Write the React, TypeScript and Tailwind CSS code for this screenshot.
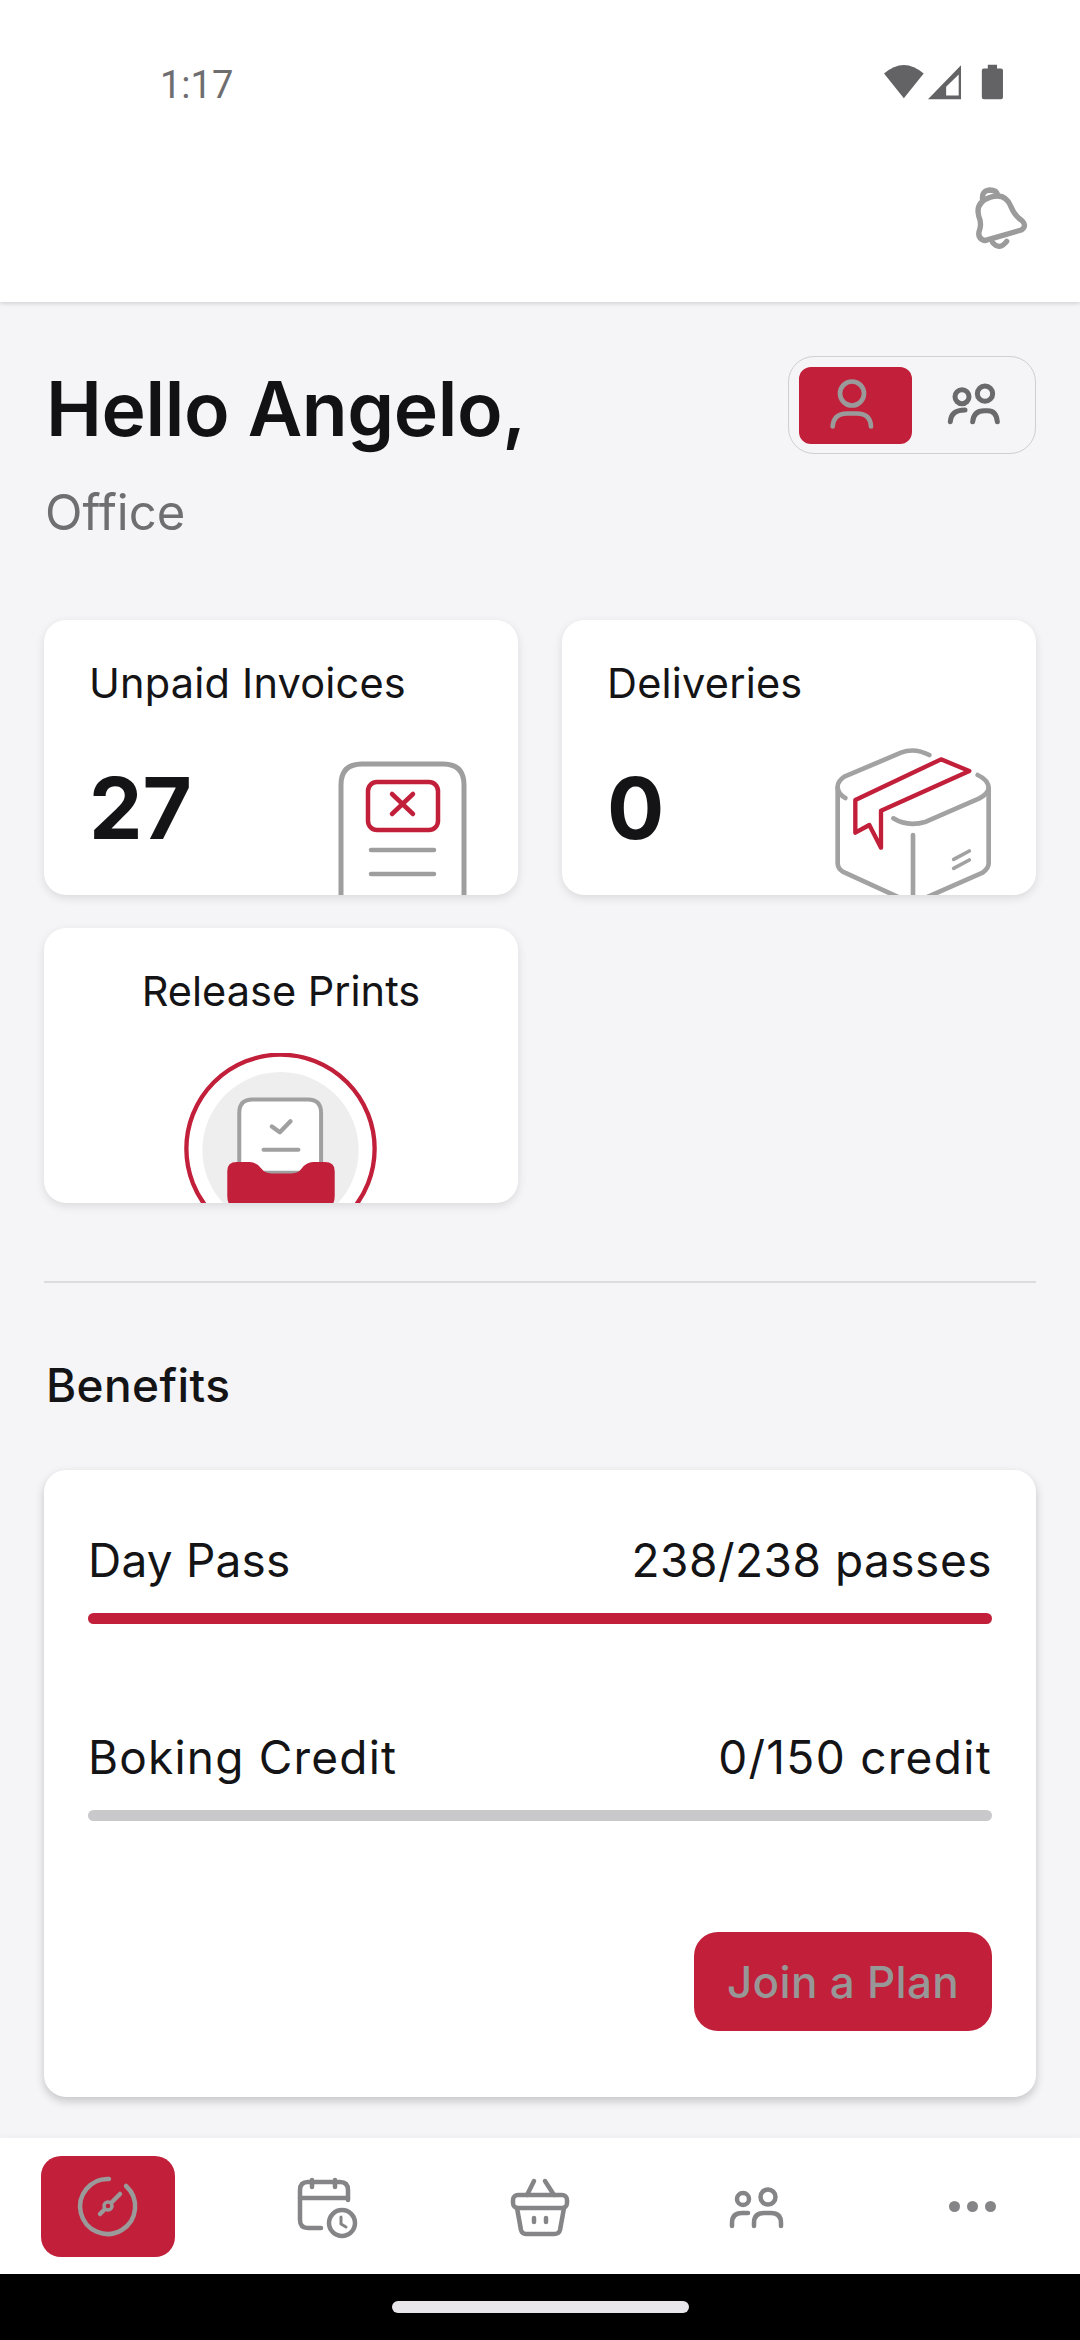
import React from "react";

const RED = "#c21f3a";

function StatusIcons() {
  return (
    <svg width="127" height="38" viewBox="60 40 380 115">
      <path d="M70 72 Q130 20 190 72 L130 147 Z" fill="#636365" />
      <path fillRule="evenodd" d="M203 150 L303 47 V150 Z M258 138 H296 V75 L258 112 Z" fill="#636365" />
      <path d="M384 45 H412 V57 H424 Q430 57 430 63 V144 Q430 150 424 150 H372 Q366 150 366 144 V63 Q366 57 372 57 H384 Z" fill="#636365" />
    </svg>
  );
}

function Bell() {
  return (
    <svg width="60" height="70" viewBox="330 400 180 210" fill="none" stroke="#9b9b9b" strokeWidth="16" strokeLinecap="round" strokeLinejoin="round">
      <path d="M362 448 Q358 420 383 418 Q404 418 408 434" />
      <path d="M368 570 Q345 562 352 540 Q360 520 350 495 Q340 455 385 440 Q430 425 447 468 Q458 495 480 510 Q496 526 478 538 Z" />
      <path d="M392 576 Q412 600 434 572" />
    </svg>
  );
}

function PersonIcon() {
  return (
    <svg width="50" height="56" viewBox="195 110 150 165" fill="none" stroke="#9a9a9a" strokeWidth="14" strokeLinecap="round">
      <circle cx="270" cy="158" r="36" />
      <path d="M212 257 Q215 218 255 218 H285 Q325 218 327 257" />
    </svg>
  );
}

function PeopleIconToggle() {
  return (
    <svg width="56" height="44" viewBox="555 125 168 130" fill="none" stroke="#6a6a6c" strokeWidth="15" strokeLinecap="round">
      <circle cx="603" cy="165" r="21" />
      <circle cx="672" cy="156" r="23" />
      <path d="M568 240 Q570 205 612 205" />
      <path d="M635 240 Q638 207 670 207 H680 Q706 207 709 240" />
    </svg>
  );
}

function InvoiceArt() {
  return (
    <svg width="134" height="137" viewBox="335 758 134 137" fill="none" strokeLinecap="round" strokeLinejoin="round" className="-mt-[1px] mr-[5px] shrink-0">
      <path d="M341 900 V785 Q341 764 362 764 H443 Q464 764 464 785 V900" stroke="#9e9e9f" strokeWidth="5" />
      <rect x="368" y="782" width="70" height="48" rx="9" stroke={RED} strokeWidth="4.5" />
      <path d="M392 794 L413 814 M413 794 L392 814" stroke={RED} strokeWidth="4.5" />
      <path d="M371 850 H434 M371 874 H434" stroke="#9e9e9f" strokeWidth="4.5" />
    </svg>
  );
}

function BoxArt() {
  return (
    <svg width="164" height="149" viewBox="90 78 492 447" fill="none" strokeLinecap="round" strokeLinejoin="round" className="-mr-[3px] -mt-[13px] shrink-0">
      <g stroke="#a2a2a3" strokeWidth="14">
        <path d="M385 105 Q340 82 300 98 L130 170 Q108 185 110 203 Q112 222 133 234" />
        <path d="M110 203 V430 Q110 445 125 455 L300 535" />
        <path d="M530 165 Q563 180 563 205 V430 Q563 445 545 458 L370 535" />
        <path d="M277 295 Q320 322 375 305 L535 235 Q560 222 563 205" />
        <path d="M336 345 V535" />
        <path d="M458 418 L505 393 M458 445 L505 420" strokeWidth="11" />
      </g>
      <path d="M420 118 L505 153 L240 272 V383 L205 315 L163 338 V240 Z" stroke={RED} strokeWidth="13" />
    </svg>
  );
}

function ReleaseArt() {
  return (
    <svg width="197" height="153" viewBox="100 60 590 460" fill="none" strokeLinecap="round" strokeLinejoin="round" className="shrink-0">
      <circle cx="392" cy="348" r="283" stroke={RED} strokeWidth="13" />
      <circle cx="392" cy="352" r="235" fill="#eeeeef" />
      <path d="M268 420 V240 Q268 200 308 200 H474 Q514 200 514 240 V420 Z" fill="#fff" stroke="#a0a0a1" strokeWidth="12" />
      <path d="M366 281 L390 298 L422 265" stroke="#a0a0a1" strokeWidth="13" />
      <path d="M341 351 H446" stroke="#a0a0a1" strokeWidth="12" />
      <path d="M232 415 Q232 388 260 388 H300 Q320 388 335 408 Q345 422 365 422 H425 Q445 422 455 408 Q470 388 490 388 H525 Q555 388 555 415 V490 Q555 525 525 525 H260 Q232 525 232 490 Z" fill={RED} />
    </svg>
  );
}

function NavSvg({ stroke, children }: { stroke: string; children: React.ReactNode }) {
  return (
    <svg width="70" height="70" viewBox="-35 -35 70 70" fill="none" stroke={stroke} strokeWidth="4.5" strokeLinecap="round" strokeLinejoin="round">
      {children}
    </svg>
  );
}

function Card({ title, value, art }: { title: string; value: string; art: React.ReactNode }) {
  return (
    <div className="h-[275px] overflow-hidden rounded-[22px] bg-white pl-[45px] pr-[44px] pt-[37px] shadow-[0_3px_10px_rgba(0,0,0,0.11)]">
      <div className="text-[41.5px] leading-[52px] tracking-[0.2px] text-[#141416]">{title}</div>
      <div className="mt-[50px] flex items-start justify-between">
        <div className="mt-[6px] text-[85px] font-bold leading-[88px] text-[#141416]">{value}</div>
        {art}
      </div>
    </div>
  );
}

function Meter({ label, value, color, labelClass, valueClass }: { label: string; value: string; color: string; labelClass: string; valueClass: string }) {
  return (
    <div>
      <div className="flex items-center justify-between text-[46px] leading-[60px] text-[#141416]">
        <span className={labelClass}>{label}</span>
        <span className={valueClass}>{value}</span>
      </div>
      <div className="mt-[23px] h-[11px] rounded-full" style={{ backgroundColor: color }} />
    </div>
  );
}

export default function App() {
  return (
    <div className="flex h-[2340px] w-[1080px] flex-col overflow-hidden bg-[#f5f4f7] [font-family:Inter,sans-serif]">
      <header className="relative z-10 h-[302px] shrink-0 bg-white shadow-[0_1px_5px_rgba(0,0,0,0.18)]">
        <div className="flex h-[164px] items-start justify-between pl-[160px] pr-[73px] pt-[63px]">
          <span className="mt-[3px] text-[38px] leading-[38px] text-[#6e6e70] [font-family:Roboto,sans-serif]">1:17</span>
          <StatusIcons />
        </div>
        <div className="flex justify-end pr-[48px] pt-[20px]">
          <Bell />
        </div>
      </header>

      <main className="min-h-0 flex-1 overflow-hidden px-[44px]">
        <div className="flex items-start justify-between pt-[54px]">
          <div className="pl-[2px]">
            <h1 className="mt-[7px] text-[75px] font-semibold leading-[92px] tracking-[-0.4px] text-[#121214]">Hello Angelo,</h1>
            <p className="-ml-[1px] mt-[28px] text-[49px] leading-[60px] text-[#6f6f72]">Office</p>
          </div>
          <div className="flex h-[98px] w-[248px] items-center rounded-[26px] border border-[#cfcfd2] pl-[10px]">
            <div className="flex h-[77px] w-[113px] items-center justify-center rounded-[12px] bg-[#c21f3a] pr-[8px]">
              <PersonIcon />
            </div>
            <div className="flex flex-1 items-center justify-center">
              <PeopleIconToggle />
            </div>
          </div>
        </div>

        <div className="mt-[77px] grid grid-cols-2 gap-x-[44px] gap-y-[33px]">
          <Card title="Unpaid Invoices" value="27" art={<InvoiceArt />} />
          <Card title="Deliveries" value="0" art={<BoxArt />} />
          <div className="flex h-[275px] flex-col items-center overflow-hidden rounded-[22px] bg-white pt-[37px] shadow-[0_3px_10px_rgba(0,0,0,0.11)]">
            <div className="text-[41.5px] leading-[52px] text-[#141416]">Release Prints</div>
            <div className="mt-[36px]">
              <ReleaseArt />
            </div>
          </div>
        </div>

        <div className="mt-[78px] h-[2px] bg-[#dcdcdf]" />

        <h2 className="mt-[74px] pl-[2px] text-[46px] font-medium leading-[56px] tracking-[0.4px] text-[#141416]">Benefits</h2>

        <section className="mt-[57px] flex h-[627px] flex-col rounded-[22px] bg-white px-[44px] pb-[66px] pt-[60px] shadow-[0_4px_10px_rgba(0,0,0,0.2)]">
          <Meter label="Day Pass" value="238/238 passes" color="#c21f3a" labelClass="tracking-[0.2px]" valueClass="tracking-[0.5px]" />
          <div className="mt-[103px]">
            <Meter label="Boking Credit" value="0/150 credit" color="#c9c9cb" labelClass="tracking-[1.2px]" valueClass="tracking-[1.3px]" />
          </div>
          <button className="mt-auto flex h-[99px] w-[298px] items-center justify-center self-end rounded-[24px] bg-[#c21f3a] text-[44px] font-medium tracking-[0.3px] text-[#979797]">
            Join a Plan
          </button>
        </section>
      </main>

      <nav className="grid h-[136px] shrink-0 grid-cols-5 items-center bg-white shadow-[0_-2px_6px_rgba(0,0,0,0.03)]">
        <div className="flex justify-center">
          <div className="flex h-[101px] w-[134px] items-center justify-center rounded-[20px] bg-[#c21f3a]">
            <NavSvg stroke="#9a9a9a">
              <path d="M1 -27 A27.5 27.5 0 1 0 18 -20" />
              <path d="M12 -12 L4 -4 M-4 4 L-8 8" />
              <circle cx="0" cy="0" r="4" strokeWidth="3.5" />
            </NavSvg>
          </div>
        </div>
        <div className="flex justify-center">
          <NavSvg stroke="#858587">
            <path d="M24 -6 V-16 Q24 -24 16 -24 H-16 Q-24 -24 -24 -16 V14 Q-24 22 -16 22 H-3" />
            <path d="M-24 -8 H24 M-12 -26 V-19 M11 -26 V-19" />
            <circle cx="18" cy="17" r="13" />
            <path d="M17 11 V18 L22 21" strokeWidth="3" />
          </NavSvg>
        </div>
        <div className="flex justify-center">
          <NavSvg stroke="#858587">
            <path d="M-6 -25 L-13 -11 M5 -25 L14 -11" />
            <rect x="-27" y="-11" width="54" height="13" rx="5" />
            <path d="M-23 2 L-19 24 Q-18 28 -14 28 H14 Q19 28 20 24 L24 2" />
            <path d="M-6 12 V16 M6 12 V16" />
          </NavSvg>
        </div>
        <div className="flex justify-center">
          <NavSvg stroke="#858587">
            <circle cx="12" cy="-9" r="7.5" />
            <circle cx="-13" cy="-7" r="6" />
            <path d="M-2 20 V17 Q-2 7 8 7 H15 Q25 7 25 17 V20" />
            <path d="M-24 20 V17 Q-24 7 -14 7 H-8" />
          </NavSvg>
        </div>
        <div className="flex justify-center gap-[7px]">
          <span className="h-[11px] w-[11px] rounded-full bg-[#858587]" />
          <span className="h-[11px] w-[11px] rounded-full bg-[#858587]" />
          <span className="h-[11px] w-[11px] rounded-full bg-[#858587]" />
        </div>
      </nav>

      <div className="flex h-[66px] shrink-0 items-center justify-center bg-black">
        <div className="h-[12px] w-[297px] rounded-full bg-[#e8e6ea]" />
      </div>
    </div>
  );
}
